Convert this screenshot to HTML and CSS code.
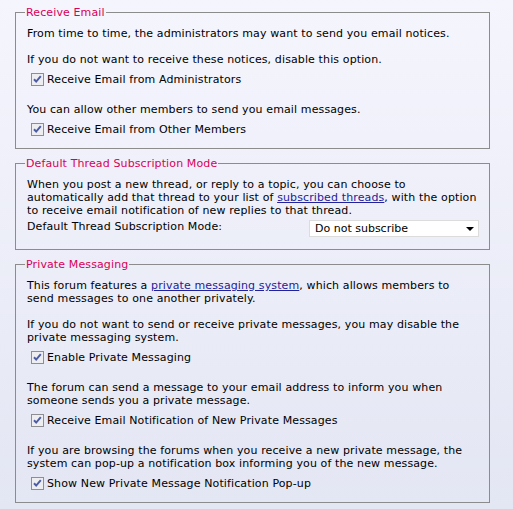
FILE: index.html
```html
<!DOCTYPE html>
<html lang="en">
<head>
  <meta charset="UTF-8">
  <meta name="viewport" content="width=device-width, initial-scale=1.0">
  <title>Edit Options</title>
  <link rel="stylesheet" href="styles.css">
</head>
<body>
  <div class="page">

    <fieldset class="fieldset">
      <legend>Receive Email</legend>
      <div class="group">
        <p>From time to time, the administrators may want to send you email notices.</p>
        <p>If you do not want to receive these notices, disable this option.</p>
        <label class="opt">
          <svg class="cb" width="13" height="13" viewBox="0 0 13 13"><rect x="0.5" y="0.5" width="12" height="12" class="cb-box"/><path d="M3 6.2 L5.2 8.6 L9.8 3.2" class="cb-tick"/></svg>
          Receive Email from Administrators
        </label>
      </div>
      <div class="group">
        <p>You can allow other members to send you email messages.</p>
        <label class="opt">
          <svg class="cb" width="13" height="13" viewBox="0 0 13 13"><rect x="0.5" y="0.5" width="12" height="12" class="cb-box"/><path d="M3 6.2 L5.2 8.6 L9.8 3.2" class="cb-tick"/></svg>
          Receive Email from Other Members
        </label>
      </div>
    </fieldset>

    <fieldset class="fieldset">
      <legend>Default Thread Subscription Mode</legend>
      <p class="intro">When you post a new thread, or reply to a topic, you can choose to automatically add that thread to your list of <a href="#">subscribed threads</a>, with the option to receive email notification of new replies to that thread.</p>
      <div class="mode">
        <span>Default Thread Subscription Mode:</span>
        <span class="select">
          <select name="autosubscribe">
            <option selected>Do not subscribe</option>
            <option>Without email notification</option>
            <option>Instant email notification</option>
            <option>Daily email notification</option>
            <option>Weekly email notification</option>
          </select>
        </span>
      </div>
    </fieldset>

    <fieldset class="fieldset">
      <legend>Private Messaging</legend>
      <div class="group">
        <p>This forum features a <a href="#">private messaging system</a>, which allows members to send messages to one another privately.</p>
        <p>If you do not want to send or receive private messages, you may disable the private messaging system.</p>
        <label class="opt">
          <svg class="cb" width="13" height="13" viewBox="0 0 13 13"><rect x="0.5" y="0.5" width="12" height="12" class="cb-box"/><path d="M3 6.2 L5.2 8.6 L9.8 3.2" class="cb-tick"/></svg>
          Enable Private Messaging
        </label>
      </div>
      <div class="group">
        <p>The forum can send a message to your email address to inform you when someone sends you a private message.</p>
        <label class="opt">
          <svg class="cb" width="13" height="13" viewBox="0 0 13 13"><rect x="0.5" y="0.5" width="12" height="12" class="cb-box"/><path d="M3 6.2 L5.2 8.6 L9.8 3.2" class="cb-tick"/></svg>
          Receive Email Notification of New Private Messages
        </label>
      </div>
      <div class="group">
        <p>If you are browsing the forums when you receive a new private message, the system can pop-up a notification box informing you of the new message.</p>
        <label class="opt">
          <svg class="cb" width="13" height="13" viewBox="0 0 13 13"><rect x="0.5" y="0.5" width="12" height="12" class="cb-box"/><path d="M3 6.2 L5.2 8.6 L9.8 3.2" class="cb-tick"/></svg>
          Show New Private Message Notification Pop-up
        </label>
      </div>
    </fieldset>

  </div>
</body>
</html>
```

FILE: styles.css
```css
html { min-height: 100%; background: linear-gradient(#f5f5fd, #e3e6f3); }
body { margin: 0; font: 11px/13px "DejaVu Sans", Verdana, sans-serif; letter-spacing: 0.12px; color: #000; }
a { color: #22229c; }

.page { width: 475px; padding: 6px 0 0 15px; }

.fieldset { margin: 0 0 8px; padding: 8px 12px 12px 11px; border: 1px solid #8c8c8c; }
.fieldset legend { margin-left: -2px; padding: 0 1px; color: #d8005a; }
.fieldset p { margin: 0 0 13px; }
.fieldset p:last-of-type { margin-bottom: 0; }

.group + .group { margin-top: 17px; }

.opt { display: flex; align-items: center; gap: 3px; height: 13px; margin-top: 7px; padding-left: 4px; }
.cb { flex: none; }
.cb-box { fill: #eeeef0; stroke: #8e8e92; }
.cb-tick { fill: none; stroke: #4c5da8; stroke-width: 2; }

.intro { margin: 0; }
.mode { display: flex; justify-content: space-between; align-items: flex-start; margin-top: 3px; }
.select { position: relative; display: block; margin-right: -2px; }
.select select { display: block; width: 170px; height: 17px; margin: 0; padding: 0 0 0 5px; border: 1px solid #dcdcdc; background: #fff; font: inherit; color: #000; appearance: none; -webkit-appearance: none; border-radius: 0; }
.select::after { content: ""; position: absolute; right: 5px; top: 7px; border-left: 4px solid transparent; border-right: 4px solid transparent; border-top: 4px solid #000; pointer-events: none; }
```
